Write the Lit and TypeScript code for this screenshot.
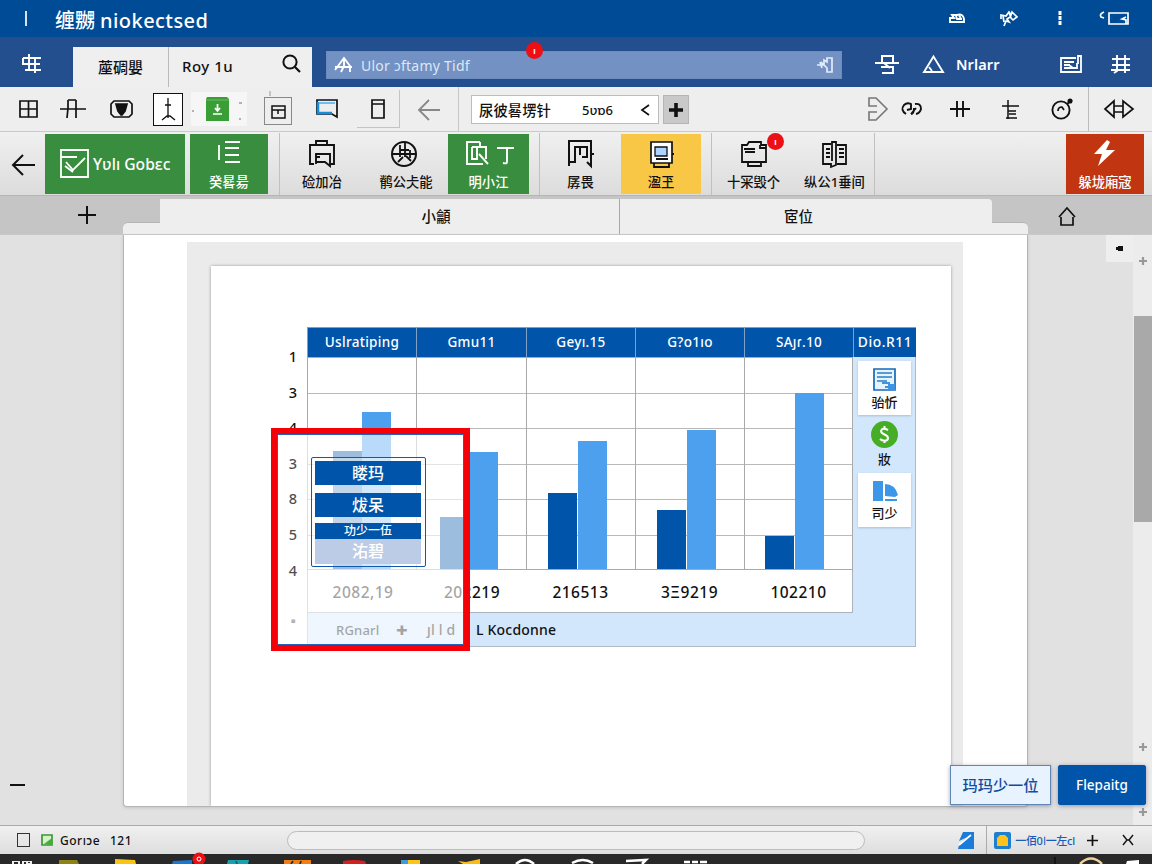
import { LitElement, html, svg, css, TemplateResult } from "lit";
import { customElement } from "lit/decorators.js";

/* Line icon drawn on a w x h canvas, one unit per pixel. */
const icon = (w: number, h: number, body: TemplateResult<2>, cls = "") =>
  html`<svg class="ic ${cls}" width=${w} height=${h} viewBox="0 0 ${w} ${h}">${body}</svg>`;

const columns = [
  { head: "Uslratiping", label: "2082,19", pad: 26, gap: 0, dark: 118, light: 157 },
  { head: "Gmu11", label: "202219", pad: 24, gap: 0, dark: 52, light: 117 },
  { head: "Geyı.15", label: "216513", pad: 22, gap: 1, dark: 76, light: 128 },
  { head: "G?o1ıo", label: "3Ξ9219", pad: 22, gap: 1, dark: 59, light: 139 },
  { head: "SAȷɾ.10", label: "102210", pad: 21, gap: 1, dark: 33, light: 176 },
];

@customElement("app-root")
export class AppRoot extends LitElement {
  static styles = css`
    :host { display: block; width: 1152px; height: 864px; overflow: hidden; font-family: "Noto Sans", "Noto Sans CJK SC", sans-serif; color: #111; background: #e1e1e1; }
    * { box-sizing: border-box; }
    .ic { display: block; flex: none; fill: none; stroke: currentColor; stroke-width: 1.7; overflow: visible; }
    .row { display: grid; align-items: center; justify-items: center; white-space: nowrap; }
    .start { justify-self: start; }

    .title { height: 37px; background: #004b95; color: #fff; grid-template-columns: 52px 880px 50px 54px 47px 62px; padding-bottom: 2px; }
    .title .name { justify-self: start; padding-left: 3px; padding-top: 6px; font-size: 20px; font-weight: 500; letter-spacing: .45px; line-height: 30px; }
    .title .name span { font-size: 20px; margin-right: 5px; letter-spacing: 0; }

    .nav { height: 50px; background: #234f8f; color: #fff; grid-template-columns: 64px 9px 239px 14px 516px 20px 50px 42px 2px 80px 70px 30px; align-items: center; }
    .nav > .ic { margin-top: 4px; }
    .tabs { width: 239px; height: 40px; align-self: end; display: grid; grid-template-columns: 95px 114px 30px; align-items: center; background: #efefef; color: #111; font-size: 15px; font-weight: 500; }
    .tabs div { text-align: center; line-height: 38px; }
    .tabs .ic { margin: -7px 0 0; }
    .tabs .roy { height: 40px; border-left: 1px solid #bbb; text-align: left; padding-left: 13px; letter-spacing: .5px; }
    .search { position: relative; width: 516px; height: 28px; margin-top: 6px; background: #7391c2; display: flex; align-items: center; padding: 0 7px; border: 1px solid #6d8cbe; }
    .search .q { flex: 1; padding-left: 8px; font-size: 14px; color: #dce7f8; letter-spacing: .25px; }
    .badge { position: absolute; width: 17px; height: 17px; border-radius: 50%; background: #ee0f14; color: #fff; font-size: 8px; font-weight: 700; line-height: 17px; text-align: center; }
    .search .badge { left: 199px; top: -10px; }
    .user { font-size: 14.5px; font-weight: 600; letter-spacing: .1px; margin-top: 4px; justify-self: start; }

    .tools { height: 45px; background: #eee; border-bottom: 1px solid #c9c9c9; padding-left: 6px; grid-template-columns: 44px 46px 50px 44px 58px 60px 38px 11px 43px 59px 12px 188px 4px 26px 171px 35px 33px 63px 39px 64px 58px; }
    .boxed { width: 30px; height: 33px; border: 1.5px solid #111; background: #fff; display: grid; place-items: center; }
    .soft { width: 56px; height: 34px; background: #f6f6f6; display: grid; place-items: center; }
    .frame { width: 28px; height: 28px; border: 1px solid #888; display: grid; place-items: center; margin-top: 3px; }
    .corner { width: 43px; height: 38px; border-right: 1px solid #c4c4c4; border-bottom: 1px solid #c4c4c4; display: grid; place-items: center; }
    .back { width: 59px; height: 44px; border-right: 1px solid #c7c7c7; display: grid; place-items: center; }
    .combo { width: 188px; height: 29px; background: #fff; border: 1px solid #bcbcbc; display: flex; align-items: center; padding: 0 9px 0 7px; font-size: 14.4px; font-weight: 500; margin-top: 1px; }
    .combo b { font-weight: 500; font-size: 13px; margin-left: 31px; flex: 1; }
    .plus { width: 26px; height: 29px; background: #c9c9c9; border: 1px solid #b5b5b5; display: grid; place-items: center; margin-top: 1px; }
    .lr { width: 62px; height: 44px; border-left: 1px solid #bbb; display: grid; place-items: center; margin-left: -8px; padding-right: 2px; }

    .ribbon { height: 64px; background: linear-gradient(#f0f0f0, #dcdcdc); border-bottom: 1px solid #b5b5b5; grid-template-columns: 45px 140px 5px 78px 12px 84px 84px 81px 11px 81px 80px 11px 83px 80px 191px 78px 8px; }
    .tile { width: 100%; height: 60px; display: flex; flex-direction: column; align-items: center; justify-content: space-between; padding: 6px 0 3px; font-size: 13.3px; font-weight: 500; line-height: 18px; position: relative; }
    .green { background: #388e3e; color: #fff; }
    .yellow { background: #f8c746; }
    .red { background: #c13510; color: #fff; }
    .big { flex-direction: row; justify-content: flex-start; padding: 0 0 0 15px; gap: 4px; font-size: 15.6px; }
    .rule { width: 100%; height: 62px; border-right: 1px solid #c0c0c0; }
    .ruled { border-right: 1px solid #c0c0c0; height: 62px; padding: 7px 0 4px; }
    .tile .badge { left: 55px; top: -1px; }

    .sheets { height: 39px; background: #c5c5c5; border-bottom: 1px solid #c9c9c9; grid-template-columns: 123px 37px 832px 36px 124px; align-items: end; }
    .sheets > .ic { align-self: center; }
    .sheets > .add { margin-left: 51px; }
    .sheets > .home { margin: 3px 46px 0 0; }
    .step { width: 100%; height: 12px; background: #eee; border-top: 1px solid #b5b5b5; }
    .step.l { border-radius: 5px 0 0 0; }
    .step.r { border-radius: 0 5px 0 0; }
    .strip { width: 100%; height: 35px; display: grid; grid-template-columns: 459px 373px; background: #eee; border-radius: 0 4px 0 0; text-align: center; font-size: 14.5px; font-weight: 500; line-height: 35px; }
    .strip div + div { border-left: 1px solid #aaa; padding-right: 15px; }
    .strip div:first-child { padding-left: 93px; }

    .work { position: relative; height: 590px; display: grid; grid-template-columns: 123px 905px 105px 19px; background: #e1e1e1; }
    .minus { width: 15px; height: 2px; background: #111; margin: 549px 0 0 10px; }
    .paper { height: 572px; background: #fff; border: solid #b5b5b5; border-width: 0 1px 1px; border-radius: 0 0 4px 4px; padding: 7px 64px 0 63px; box-shadow: 0 1px 3px #aaa8; }
    .mat { height: 564px; background: #ebebeb; padding: 24px 12px 0 24px; }
    .page { position: relative; height: 540px; background: #fff; box-shadow: 0 0 3px #999; clip-path: inset(-4px -4px 0 -4px); padding: 61px 35px 0 71px; display: grid; grid-template-columns: 25px 609px; }
    .axis { margin: 20px 0 0; text-align: center; font: 500 14.5px/18px "Noto Sans"; width: 22px; display: grid; grid-template-rows: 36px 35px 36px 35px 36px 36px 50px 20px; }
    .axis span:last-child { color: #999; }
    .chart { width: 609px; height: 320px; display: grid; grid-template-columns: 546px 63px; background: #d3e7fc; box-shadow: inset 0 0 0 1px #b1bbc8; }
    .heads { height: 30px; display: grid; grid-template-columns: 109px 110px 109px 109px 109px; }
    .head { background: #0055aa; color: #fff; height: 30px; line-height: 29px; text-align: center; font-size: 13.5px; font-weight: 500; letter-spacing: .3px; border: 1px solid #7f9fc4; border-width: 1px 0 0 1px; white-space: nowrap; overflow: hidden; }
    .plot { position: relative; height: 213px; display: grid; grid-template-columns: 109px 110px 109px 109px 109px; background: #fff; border: 1px solid #aaa; border-width: 1px 1px 1px 0; }
    .lines { position: absolute; inset: 0; display: grid; grid-template-rows: 36px 35px 36px 35px 36px; }
    .lines i { border-bottom: 1px solid #b9b9b9; }
    .col { position: relative; border-left: 1px solid #a9a9a9; display: flex; align-items: flex-end; }
    .bar { width: 29px; background: #0055aa; }
    .bar.light { background: #4ca0ee; }
    .labels { height: 43px; background: #fff; display: grid; grid-template-columns: 110px 108px 109px 109px 109px; text-align: center; font: 500 15.5px/45px "Noto Sans"; letter-spacing: .5px; border: 1px solid #aab3bd; border-width: 0 1px 1px; }
    .foot { height: 34px; line-height: 34px; font-size: 14px; font-weight: 500; display: grid; grid-template-columns: 83px 37px 49px 1fr; letter-spacing: .2px; }
    .foot span:first-child { padding-left: 29px; font-size: 13px; }
    .foot .p { font-weight: 900; font-size: 20px; padding-left: 6px; }
    .side { display: flex; flex-direction: column; align-items: center; }
    .side .head { width: 63px; margin-bottom: 4px; flex: none; font-size: 13.8px; letter-spacing: .55px; line-height: 28px; }
    .card { width: 53px; display: flex; flex-direction: column; align-items: center; font-size: 13px; font-weight: 500; line-height: 18px; height: 54px; padding-top: 7px; gap: 2px; }
    .card.w { background: #fff; box-shadow: 0 1px 2px #8a9aaa88; }
    .card.m { height: 58px; padding-top: 6px; gap: 2px; }

    .sel { position: absolute; left: 60px; top: 162px; width: 199px; height: 223px; border: 6px solid #f60008; background: linear-gradient(90deg, #ffffff40 28px, #ffffff9c 30px); box-shadow: inset 0 0 0 1px #2461bd; padding: 23px 0 0 34px; }
    .menu { width: 115px; height: 110px; border: 1.5px solid #1258b0; border-radius: 2px; background: #ffffff60; padding: 3px; display: flex; flex-direction: column; }
    .menu div { width: 106px; background: #0055aa; color: #fff; text-align: center; font-size: 16px; font-weight: 500; height: 24px; line-height: 24px; margin-bottom: 8px; flex: none; overflow: hidden; }
    .menu .c { height: 16px; line-height: 16px; font-size: 12px; margin: -2px 0 0; }
    .menu .d { background: #bccce6; margin: 0; height: 25px; line-height: 25px; }

    .dot { width: 27px; height: 27px; background: #eee; margin-left: 78px; display: grid; place-items: center; }
    .scroll { background: #ececec; display: flex; flex-direction: column; align-items: center; color: #999; }
    .scroll .ic { stroke-width: 2.2; }
    .thumb { width: 18px; height: 206px; background: #a9a9a9; margin: 51px 0 221px; flex: none; }
    .t1 { margin-top: 22px; }
    .t3 { margin-top: 57px; }
    .actions { position: absolute; left: 950px; top: 530px; display: flex; gap: 7px; font-size: 15.2px; text-align: center; }
    .actions div { width: 101px; height: 40px; line-height: 38px; background: #e7f3ff; border: 1px solid #6286b4; color: #124c9a; font-weight: 500; box-shadow: 0 1px 4px #5578; }
    .actions .p { width: 88px; background: #0055aa; color: #fff; font-size: 13.5px; border-color: #0055aa; border-radius: 2px; }

    .status { height: 29px; background: linear-gradient(#f0f0f0, #dedede); border-top: 1px solid #aaa; grid-template-columns: 34px 26px 50px 177px 578px 80px 41px 1px 30px 60px 30px 41px; padding-bottom: 1px; }
    .check { width: 13px; height: 14px; border: 1px solid #333; margin-left: 17px; }
    .status .st, .status .n { justify-self: start; font: 500 12px "Noto Sans"; letter-spacing: .5px; }
    .pill { width: 578px; height: 19px; border: 1px solid #bcbcbc; border-radius: 10px; background: #f0f0f0; }
    .div { width: 1px; height: 28px; background: #aaa; }
    .lang { color: #1a5bb8; font-size: 11px; font-weight: 500; letter-spacing: -.3px; margin-right: 4px; }
    .task { height: 10px; background: #292929; }
    .task .ic { stroke: none; }
  `;

  titleBar() {
    return html`<div class="row title">
      ${icon(2, 16, svg`<path d="M1 1v15"/>`)}
      <div class="name"><span>缠嬲</span>niokectsed</div>
      ${icon(16, 12, svg`<path d="M1 10V6h4L3 3h5q6-2 7 4v3zM7 4l1 3h5M10 4l2 2" stroke-width="1.9"/>`)}
      ${icon(18, 16, svg`<path d="M1 9V5l5 1 3-4 2 3 1-3 5 5-4 3-3-3-3 2 2 3-3-1-2 5M9 2l2 6M3 6l1 6"/>`)}
      ${icon(4, 16, svg`<path d="M2 1v15" stroke-width="3" stroke-dasharray="4 1"/>`)}
      ${icon(30, 14, svg`<path d="M5 1Q0 3 2 6l3 1M10 2h19v11H10zM27 6l-4 2 4 1v4"/>`)}
    </div>`;
  }

  navBar() {
    return html`<div class="row nav">
      ${icon(20, 20, svg`<path d="M7 0v15M13 3v16M1 4h18M1 4v6M0 10h18M3 16h16" stroke-width="1.9"/>`)}
      <i></i>
      <div class="tabs"><div>蓙碉嬰</div><div class="roy">Roy 1u</div>
        ${icon(20, 20, svg`<circle cx="8" cy="8" r="6.6" stroke-width="2"/><path d="M13 13l5 5" stroke-width="2.2"/>`)}</div>
      <i></i>
      <div class="search">
        ${icon(19, 18, svg`<path d="M1 11h17M1 14l9-12 6 8v6M10 2v8l-3 6" stroke-width="1.9"/>`)}
        <span class="q">Ulor ɔftamy Tidf</span>
        ${icon(18, 17, svg`<path d="M1 8h7V3l3 2V1h5v14h-5v-4L5 5M4 5l2 6" stroke="#e3ecfa"/>`)}
        <span class="badge">ı</span>
      </div>
      <i></i>
      ${icon(24, 19, svg`<path d="M0 8h24M7 8V1h11v6M6 12h12v6H7M9 8l6 5" stroke-width="2"/>`)}
      ${icon(21, 18, svg`<path d="M10.5 1.500L1 17h19zM6 12l3 4" stroke-width="1.9"/>`)}
      <i></i>
      <div class="user">Nrlarr</div>
      ${icon(22, 18, svg`<path d="M16 3H1v14h20V1h-3v8M4 7h10M4 10h6M4 13h13V8M9 10l4 3" stroke-width="1.8"/>`)}
      ${icon(20, 19, svg`<path d="M6 0v16l-3 2M14 0v18M1 4h18M1 10h18M0 15h19" stroke-width="1.9"/>`)}
    </div>`;
  }

  toolBar() {
    return html`<div class="row tools">
      ${icon(19, 18, svg`<path d="M1 1h17v16H1zM9.500 1v16M1 9h17"/>`)}
      ${icon(26, 20, svg`<path d="M0 10h26M8 1v8l-1 10M16 1v18M8 1h8"/>`)}
      ${icon(23, 18, svg`<path d="M4 1h15l3 3v10l-3 3H4l-3-3V4z"/><path d="M6 4h11l-2 7-3 4h-1l-3-4z" fill="#111"/>`)}
      <div class="boxed">${icon(14, 26, svg`<path d="M7 2v20M4 9h6M1 24l5-4h3l5 4" stroke-width="1.3"/>`)}</div>
      <div class="soft">${icon(56, 26, svg`<path d="M16 1h20l2 2v22H15V3z" fill="#3a9e36" stroke="none"/><path d="M15 4h23" stroke="#70b967" stroke-width="1"/><path d="M26.500 8v6M24 12l2.500 3 2.500-3M22 18h9" stroke="#fff"/><path d="M48 7h3M48 23h2M1 15h2" stroke="#999"/>`)}</div>
      <div class="frame">${icon(16, 16, svg`<path d="M2 3h13v12H2zM2 7h13M8 7v4" stroke-width="1.5"/><path d="M0-12v5" stroke="#bbb"/>`)}</div>
      ${icon(22, 20, svg`<path d="M1 1h20v17l-5-3H1z" stroke="#111"/><path d="M2 3v11h14" stroke="#168ee0" stroke-width="2.5"/><path d="M3 4h16" stroke="#55b8f2"/>`)}
      <i></i>
      <div class="corner">${icon(14, 20, svg`<path d="M1 1h12v18H1zM1 5h12"/>`)}</div>
      <div class="back">${icon(24, 22, svg`<path d="M23 12H2M12 2L2 12l10 10" stroke="#888" stroke-width="1.8"/>`)}</div>
      <i></i>
      <div class="combo"><span>尿彼晷塄针</span><b>5ʋɒ6</b>${icon(8, 12, svg`<path d="M8 1L1 6l7 5"/>`)}</div>
      <i></i>
      <div class="plus">${icon(14, 14, svg`<path d="M7 0v14M0 7h14" stroke-width="3.600"/>`)}</div>
      <i></i>
      ${icon(20, 24, svg`<path d="M9 9H1V1h7l11 11-11 11H1v-8h8" stroke="#777" stroke-width="1.600"/>`)}
      ${icon(21, 14, svg`<path d="M5 12Q-1 8 3 3q3-3 7-1v5l-4 1M10 12q3 0 3-6M14 2q6-1 6 5-1 4-5 5M15 6l-5 6" stroke-width="1.900"/>`)}
      ${icon(20, 16, svg`<path d="M0 8h20M7 0v16M13 0v16" stroke-width="1.900"/>`)}
      ${icon(18, 19, svg`<path d="M0 6h17M6 0v12M6 11h8M6 11v8M4 18h11M7 14h7" stroke-width="1.500"/>`)}
      ${icon(22, 20, svg`<circle cx="10" cy="11" r="8.600" stroke-width="1.900"/><path d="M7 12q0-4 4-4l2 3M16 5l5-4" /><circle cx="19" cy="2" r="1.700" fill="#111"/>`)}
      <div class="lr">${icon(30, 20, svg`<path d="M10 2v16L1 10zM19 2v16l10-8zM10 7h9M10 13h9"/>`)}</div>
    </div>`;
  }

  ribbon() {
    return html`<div class="row ribbon">
      ${icon(24, 22, svg`<path d="M24 12H2M12 2L2 12l10 10" stroke-width="2"/>`)}
      <div class="tile green big">${icon(29, 29, svg`<path d="M1 1h27v27H1zM1 8h16M6 13l7 8L25 9M5 17l8 6" stroke-width="1.800"/>`)}<span>Yʋlı Gobɛc</span></div>
      <i></i>
      <div class="tile green">${icon(26, 24, svg`<path d="M3 5v15M9 2h15M9 8h14M9 15h14M9 22h15" stroke-width="1.800"/>`)}<span>癸晷昜</span></div>
      <div class="rule"></div>
      <div class="tile">${icon(28, 28, svg`<path d="M6 24H2V5h24v19h-3M8 5V1h11v4M8 24V14h14v12l-5-4H8v-5h4" stroke-width="1.900"/>`)}<span>硷加冶</span></div>
      <div class="tile">${icon(28, 28, svg`<circle cx="12" cy="14" r="12" stroke-width="2"/><path d="M8 5v12M13 3v14M1 14h22M8 10h9M14 16l5 5M11 17l-5 5M18 10v8" stroke-width="1.800"/>`)}<span>鹡公仧能</span></div>
      <div class="tile green">${icon(50, 26, svg`<path d="M16 2H3v22h16M16 2v5M8 7h14v12M8 7v12h5V7M15 14l9 10M33 8h17M43 8v14q0 2-4 1" stroke-width="1.900"/>`)}<span>明小江</span></div>
      <div class="rule"></div>
      <div class="tile">${icon(28, 28, svg`<path d="M2 26V1h22v25l-4-4M2 22h6V7h12v10h-5M13 7v8M23 14h4" stroke-width="2"/>`)}<span>孱畏</span></div>
      <div class="tile yellow">${icon(26, 28, svg`<path d="M3 2h21v21H3z" fill="#fff"/><path d="M7 7h12v9H7z" fill="#aed4ff" stroke-width="1.300"/><path d="M6 23v4h15v-4M26 14h-2M8 19h12" stroke-width="1.800"/>`)}<span>溋玊</span></div>
      <div class="rule"></div>
      <div class="tile">${icon(28, 28, svg`<path d="M2 5h5l2-3h12v3h5v17H2zM8 22v4h13v-4M4 9h11M5 12h10M20 5v3h6" stroke-width="1.800"/>`)}<span>十冞毁𠆤</span><span class="badge">ı</span></div>
      <div class="tile ruled">${icon(28, 28, svg`<path d="M10 4H2v20h8v3l5-2V2h-4v19M16 5h9v19h-9M5 9h4M5 13h4M5 17h4M18 9h5M18 13h5M18 17h5" stroke-width="1.800"/>`)}<span>纵公1垂间</span></div>
      <i></i>
      <div class="tile red">${icon(24, 26, svg`<path d="M14 0L1 14h8L5 26l17-16h-9l4-8z" fill="#fff" stroke="none"/>`)}<span>躲垅廂宼</span></div>
    </div>
    <div class="row sheets">
      ${icon(18, 18, svg`<path d="M9 0v18M0 9h18" stroke-width="2"/>`, "add")}
      <div class="step l"></div>
      <div class="strip"><div>小龥</div><div>宧位</div></div>
      <div class="step r"></div>
      ${icon(18, 19, svg`<path d="M1 10l8-9 8 9M3 10v8h12v-8" />`, "home")}
    </div>`;
  }

  chart() {
    return html`<div class="page">
      <div class="axis">${["1", "3", "4", "3", "8", "5", "4", "▪"].map((n) => html`<span>${n}</span>`)}</div>
      <div class="chart">
        <div>
          <div class="heads">${columns.map((c) => html`<div class="head">${c.head}</div>`)}</div>
          <div class="plot"><div class="lines"><i></i><i></i><i></i><i></i><i></i></div>${columns.map((c) => html`<div class="col" style="padding-left:${c.pad - 1}px;gap:${c.gap}px">
            <div class="bar" style="height:${c.dark}px"></div><div class="bar light" style="height:${c.light}px"></div></div>`)}</div>
          <div class="labels">${columns.map((c) => html`<span>${c.label}</span>`)}</div>
          <div class="foot"><span>RGnarl</span><span class="p">+</span><span>ȷl l d</span><span>L Kocdonne</span></div>
        </div>
        <div class="side">
          <div class="head">Dio.R11</div>
          <div class="card w">${icon(23, 23, svg`<path d="M1 1h21v21H1z" fill="#e5f3ff" stroke="#1769b5"/><path d="M4 5h15M4 9h15M4 13h10" stroke="#287fc9" stroke-width="1.500"/><path d="M15 16h7v6h-7zM9 14h8v2H9zM12 18h5v2h-5z" fill="#3d94e4" stroke="none"/>`)}<span>骀忻</span></div>
          <div class="card m">${icon(27, 27, svg`<circle cx="13.500" cy="13.500" r="13.500" fill="#46ad26" stroke="none"/><path d="M17 9q-6-3-7 1c0 4 7 3 7 7s-6 3-8 1M13.500 5v3M13.500 19v3" stroke="#fff" stroke-width="2"/>`)}<span>妝</span></div>
          <div class="card w">${icon(26, 22, svg`<path d="M1 1h10v20H1zM13 4q10 0 13 11l-3 2-10-1zM13 19h12v2H13z" fill="#3d97e8" stroke="none"/>`)}<span>司少</span></div>
        </div>
      </div>
      <div class="sel"><div class="menu"><div>䁖玛</div><div>炦呆</div><div class="c">功少一伍</div><div class="d">㳓碧</div></div></div>
    </div>`;
  }

  render() {
    const spark = svg`<path d="M4 0v8M0 4h8"/>`;
    return html`${this.titleBar()}${this.navBar()}${this.toolBar()}${this.ribbon()}
      <div class="work">
        <div><div class="minus"></div></div>
        <div class="paper"><div class="mat">${this.chart()}</div></div>
        <div><div class="dot">${icon(7, 6, svg`<path d="M0 1h2V0h5v5H2V4H0z" fill="#111" stroke="none"/>`)}</div></div>
        <div class="scroll">${icon(8, 8, spark, "t1")}<div class="thumb"></div>${icon(8, 8, spark)}${icon(8, 8, spark, "t3")}</div>
        <div class="actions"><div>玛玛少一位</div><div class="p">Flepaitg</div></div>
      </div>
      <div class="row status">
        <div class="check start"></div>
        ${icon(12, 12, svg`<path d="M1 1h10v10H1z" fill="#d5f2c4" stroke="#39983a"/><path d="M3 10l8-6v7z" fill="#45ad38" stroke="none"/>`)}
        <span class="st">Gorıɔe</span><span class="n">121</span>
        <div class="pill"></div>
        <i></i>
        ${icon(16, 17, svg`<path d="M5 0h11v17H0q1-7 10-12Q5 7 1 9z" fill="#1b7bd8" stroke="none"/><path d="M1 13L13 3" stroke="#fff"/>`)}
        <div class="div"></div>
        ${icon(17, 17, svg`<rect width="17" height="17" rx="2" fill="#1d80cf" stroke="none"/><path d="M6 3h5l3 3v8H3V6z" fill="#ffc21b" stroke="none"/>`)}
        <span class="lang">一佰0ا一左cl</span>
        ${icon(11, 11, svg`<path d="M5.500 0v11M0 5.500h11"/>`)}
        ${icon(12, 12, svg`<path d="M1 1l4 5-4 5M11 1L7 6l4 5M5 6h2" stroke-width="1.400"/>`)}
      </div>
      <div class="task">${icon(1152, 10, svg`
        <path d="M12 7h8v3h-8zM22 7h10v3H22z" fill="#eee"/><path d="M14 8h4v2h-4zM24 8h2v2h-2zM28 8h2v1h-2z" fill="#292929"/>
        <path d="M59 6h18l2 4H59z" fill="#8d8215"/><path d="M115 5l20 1 1 4h-21z" fill="#f9c414"/>
        <path d="M173 7l19-1v4h-20z" fill="#1c78ce"/><path d="M228 6h21l-1 4h-21z" fill="#1ba0b0"/><path d="M236 7l1 3" stroke="#0b6471"/>
        <path d="M284 6h27v4h-27z" fill="#f08016"/><path d="M293 7l-2 3M301 7l-1 3" stroke="#292929"/><path d="M343 7q10-2 22 0l1 3h-23z" fill="#d32022"/>
        <path d="M401 6h19v4h-19z" fill="#ffc41a"/><path d="M401 6h7v4h-7z" fill="#3e9bdb"/>
        <path d="M458 7l8 1 14-3v5h-17z" fill="#fabb14"/>
        <path d="M516 10q9-8 18 0M572 9q11-6 21 0M626 7l20-1-4 4M684 8h6M692 8h6M700 8h7" fill="none" stroke="#fff" stroke-width="2.500" />
        <path d="M1080 10q11-11 22 0" fill="none" stroke="#f1d29a" stroke-width="2.500"/>
        <path d="M1127 7l12-1v4h-13z" fill="#fff"/><path d="M1055 3v7" stroke="#111"/>
        <circle cx="199" cy="5" r="6.500" fill="#ee0f14"/><circle cx="199" cy="5" r="2" fill="none" stroke="#fff" stroke-width="1"/>`)}</div>`;
  }
}
